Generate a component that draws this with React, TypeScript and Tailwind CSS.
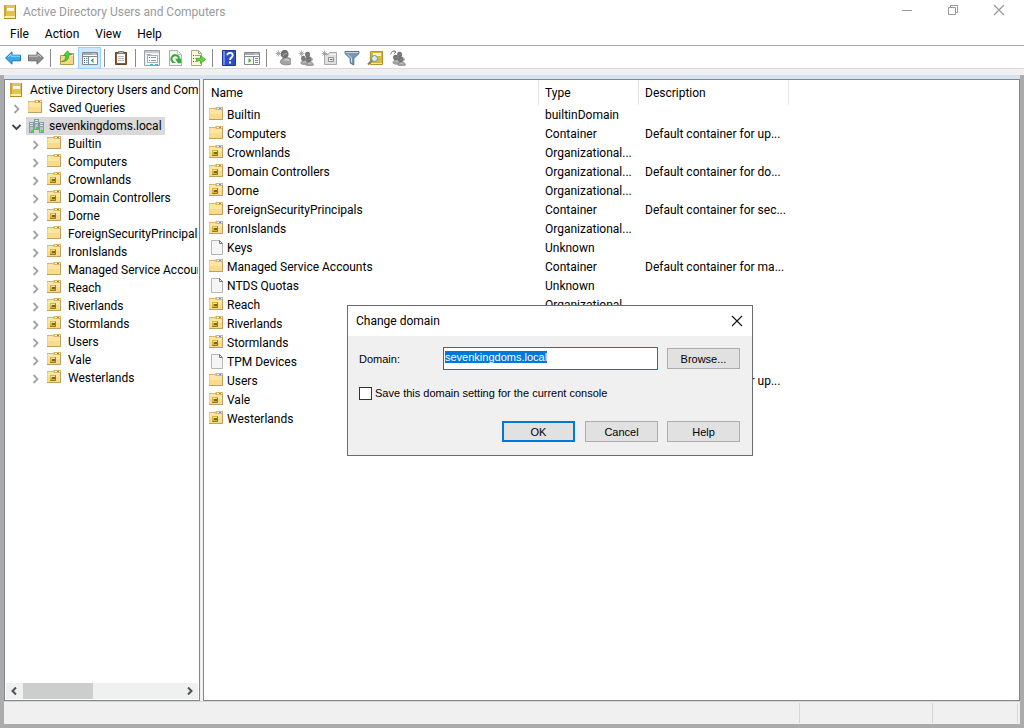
import { useEffect, useRef } from "react";
import type { ReactNode } from "react";

type Kind = "folder" | "ou" | "file";

type Entry = { name: string; kind: Kind; type: string; description?: string; inTree?: boolean };

const entries: Entry[] = [
  { name: "Builtin", kind: "folder", type: "builtinDomain", inTree: true },
  { name: "Computers", kind: "folder", type: "Container", description: "Default container for up...", inTree: true },
  { name: "Crownlands", kind: "ou", type: "Organizational...", inTree: true },
  { name: "Domain Controllers", kind: "ou", type: "Organizational...", description: "Default container for do...", inTree: true },
  { name: "Dorne", kind: "ou", type: "Organizational...", inTree: true },
  { name: "ForeignSecurityPrincipals", kind: "folder", type: "Container", description: "Default container for sec...", inTree: true },
  { name: "IronIslands", kind: "ou", type: "Organizational...", inTree: true },
  { name: "Keys", kind: "file", type: "Unknown" },
  { name: "Managed Service Accounts", kind: "folder", type: "Container", description: "Default container for ma...", inTree: true },
  { name: "NTDS Quotas", kind: "file", type: "Unknown" },
  { name: "Reach", kind: "ou", type: "Organizational...", inTree: true },
  { name: "Riverlands", kind: "ou", type: "Organizational...", inTree: true },
  { name: "Stormlands", kind: "ou", type: "Organizational...", inTree: true },
  { name: "TPM Devices", kind: "file", type: "Unknown" },
  { name: "Users", kind: "folder", type: "Container", description: "Default container for up...", inTree: true },
  { name: "Vale", kind: "ou", type: "Organizational...", inTree: true },
  { name: "Westerlands", kind: "ou", type: "Organizational...", inTree: true },
];

function Icon({ children, viewBox = "0 0 16 16" }: { children: ReactNode; viewBox?: string }) {
  return (
    <svg className="size-4 shrink-0" viewBox={viewBox} fill="none" aria-hidden="true">
      {children}
    </svg>
  );
}

function FolderIcon({ ou = false }: { ou?: boolean }) {
  return (
    <Icon viewBox="0 1 16 16">
      <path d="M1 2H7L8 1H15V14H1Z" fill="#d9b56a" />
      <path d="M9 2H14V3H9Z" fill="#fffaf0" />
      <path d="M11 2H13V3H11Z" fill="#3f93ea" />
      <path d="M2 3H7L8 4H14V13H2Z" fill="#fde6a4" />
      <path d="M2 8H14V13H2Z" fill="#fadb8c" />
      <path d="M1.500 3V13.500" stroke="#ecd08d" />
      <path d="M14.500 3V13.500H1" stroke="#c0a062" />
      {ou && (
        <>
          <path d="M4 6H10V12H4Z" fill="#d2b53c" />
          <path d="M5 7H9V8H5Z" fill="#f4e594" />
          <path d="M6 8H9V10H6Z" fill="#7d6516" />
          <path d="M9.500 6.500V11.500H4" stroke="#94781c" />
        </>
      )}
    </Icon>
  );
}

function FileIcon() {
  return (
    <Icon>
      <path d="M3.500 .5H11.500L14.500 3.500V14.500H3.500Z" fill="#f5f5f6" stroke="#b5b5b7" />
      <path d="M11.500 .5V3.500H14.500Z" fill="#fff" stroke="#77777a" />
    </Icon>
  );
}

function EntryIcon({ kind }: { kind: Kind }) {
  return kind === "file" ? <FileIcon /> : <FolderIcon ou={kind === "ou"} />;
}

function ConsoleIcon() {
  return (
    <Icon>
      <path d="M2 1H14V15H2Z" fill="#b08d2a" />
      <path d="M2 1H13V14H2Z" fill="#e3c250" />
      <path d="M2 1H4V12H2Z" fill="#c8a535" />
      <path d="M5 4H12V7H5Z" fill="#fffdf0" />
      <path d="M3 12H13V14H3Z" fill="#fff0b0" />
    </Icon>
  );
}

function DomainIcon() {
  return (
    <Icon>
      {[
        [0, 4],
        [10, 4],
        [5, 1],
      ].map(([x, y]) => (
        <g key={x}>
          <path d={`M${x} ${y}h5v11h-5z`} fill="#8599a5" />
          <path d={`M${x + 1} ${y + 1}h3v1h-3zM${x + 1} ${y + 3}h3v1h-3z`} fill="#e3edf1" />
          <path d={`M${x + 1} ${y + 5}h3v5h-3z`} fill="#b3c5cf" />
          <path d={`M${x + 2} ${y + 8}h2v2h-2z`} fill="#35e51c" />
        </g>
      ))}
    </Icon>
  );
}

function ArrowIcon({ forward = false }: { forward?: boolean }) {
  return (
    <Icon>
      {forward ? (
        <>
          <path d="M15.500 8L9 1.800V5.200H.5V10.800H9V14.200Z" fill="#8d8d8d" stroke="#6a6a6a" />
          <path d="M1.500 7V6.200H10V4.200L13 7" stroke="#c9c9c9" />
        </>
      ) : (
        <>
          <path d="M.5 8L7 1.800V5.200H15.500V10.800H7V14.200Z" fill="#36a9e8" stroke="#2376b5" />
          <path d="M3 7L6 4.200V6.200H14.500V7" stroke="#9be0fb" />
        </>
      )}
    </Icon>
  );
}

function UpFolderIcon() {
  return (
    <Icon>
      <path d="M1.500 5.500H6L7 3.500H14.500V14.500H1.500Z" fill="#f6d885" stroke="#b8954e" />
      <path d="M10 4H14V6H10Z" fill="#fff6d8" />
      <path d="M11.500 4.500H13.500" stroke="#4d9be6" />
      <path d="M2.500 11.500C5.500 11 7 9 6.800 5.500H4.500L8.500 .8L12 5H9.800C10 9 7.500 12 2.500 11.500Z" fill="#55cf35" stroke="#2d9a23" strokeWidth=".7" />
    </Icon>
  );
}

function WindowFrame({ children }: { children: ReactNode }) {
  return (
    <Icon>
      <path d="M.5 2.500H15.500V14.500H.5Z" fill="#fff" stroke="#85888d" />
      <path d="M1 3H15V5H1Z" fill="#a5a9b0" />
      <path d="M10.500 4H11.500M12.500 4H13.500" stroke="#fff" />
      <path d="M1 6.500H15" stroke="#85888d" />
      {children}
    </Icon>
  );
}

function TreePaneIcon() {
  return (
    <WindowFrame>
      <path d="M6.500 6V14" stroke="#85888d" />
      <path d="M2 8.500H3M2 10.500H3M2 12.500H3" stroke="#474b52" />
      <path d="M4 8.500H5.500M4 10.500H5.500M4 12.500H5.500" stroke="#5c9bd8" />
      <path d="M11.500 8V13L8.500 10.500Z" fill="#35b92c" />
    </WindowFrame>
  );
}

function ActionPaneIcon() {
  return (
    <WindowFrame>
      <path d="M9.500 6V14" stroke="#85888d" />
      <path d="M4.500 8V13L7.500 10.500Z" fill="#35b92c" />
      <path d="M11 8.500H14M11 10.500H14M11 12.500H14" stroke="#6f8aa5" />
    </WindowFrame>
  );
}

function ClipboardIcon() {
  return (
    <Icon>
      <path d="M2.500 2.500H13.500V14.500H2.500Z" fill="#8d5a2b" stroke="#6b4424" />
      <path d="M4 4H12V13H4Z" fill="#fff" />
      <path d="M5 6.500H11M5 8.500H11M5 10.500H11" stroke="#b3bac2" />
      <path d="M5.500 1.500H10.500V3.500H5.500Z" fill="#c8c8c8" stroke="#777" />
    </Icon>
  );
}

function PropertiesIcon() {
  return (
    <Icon>
      <path d="M.5 .5H15.500V15.500H.5Z" fill="#f1f4f7" stroke="#9a9ea3" />
      <path d="M1 1H15V3H1Z" fill="#c5cad0" />
      <path d="M3.500 5.500H13.500V12.500H3.500Z" fill="#fff" stroke="#a1adba" />
      <path d="M2.500 4.500H7" stroke="#a1adba" />
      <path d="M5 7.500H6M5 10.500H6" stroke="#1a9be0" />
      <path d="M7 7.500H12M7 10.500H12" stroke="#8d99a6" />
      <path d="M6 14.500H9M11 14.500H14" stroke="#34b7f0" />
    </Icon>
  );
}

function RefreshIcon() {
  return (
    <Icon>
      <path d="M2.500 .5H10.500L14.500 4.500V15.500H2.500Z" fill="#f8f8f8" stroke="#adadad" />
      <path d="M10.500 .5V4.500H14.500Z" fill="#fff" stroke="#c4c4c4" />
      <path d="M6.500 12.200A3.700 3.700 0 1 1 11.800 9.800" stroke="#37ac35" strokeWidth="2" />
      <path d="M8 8.800H14V13.200H11Z" fill="#37ac35" />
      <path d="M5 12.500H8.500" stroke="#37ac35" />
    </Icon>
  );
}

function ExportIcon() {
  return (
    <Icon>
      <path d="M1.500 .5H8.500L11.500 3.500V15.500H1.500Z" fill="#fff8d9" stroke="#aaa58e" />
      <path d="M8.500 .5V3.500H11.500Z" fill="#fff" stroke="#aaa58e" />
      <path d="M3 5.500H4M3 8.500H4M3 11.500H4" stroke="#4c4c4c" />
      <path d="M5 5.500H10M5 8.500H8M5 11.500H8" stroke="#a79ea1" />
      <path d="M6.500 8.300H10.500V5.500L15.500 9.500L10.500 13.500V10.800H6.500Z" fill="#66d23e" stroke="#36a326" strokeWidth=".8" />
    </Icon>
  );
}

function HelpIcon() {
  return (
    <Icon>
      <path d="M1.500 .5H14.500V15.500H1.500Z" fill="#2e50c4" stroke="#1c3394" />
      <path d="M2 1H4V15H2Z" fill="#6d8be4" />
      <path d="M6.300 5.200C6.300 2.200 11.700 2.200 11.700 5.300C11.700 7.500 9 7.500 9 10" stroke="#fff" strokeWidth="1.800" />
      <path d="M8 11.500H10V13.500H8Z" fill="#fff" />
    </Icon>
  );
}

function Spark() {
  return <path d="M3.500 .5V6.500M.5 3.500H6.500M1.500 1.500L5.500 5.500M5.500 1.500L1.500 5.500" stroke="#9c9c9c" strokeWidth=".8" />;
}

function Person({ x, y, s }: { x: number; y: number; s: number }) {
  return (
    <g transform={`translate(${x} ${y}) scale(${s})`}>
      <path d="M1 9.500C1 7 3 5.500 5.500 5.500S10 7 10 9.500C8 11.500 3 11.500 1 9.500Z" fill="#a3a3a3" stroke="#7b7b7b" strokeWidth=".6" />
      <ellipse cx="4.200" cy="3" rx="2.900" ry="3.200" fill="#707070" />
      <path d="M4 7.800C5 7 6.500 7 7.500 8" stroke="#d5d5d5" />
      <path d="M3.200 4.500C3.500 3 4.500 2.500 6 2.800" stroke="#999" />
    </g>
  );
}

function NewUserIcon() {
  return (
    <Icon>
      <Spark />
      <Person x={4} y={0} s={1.350} />
    </Icon>
  );
}

function NewGroupIcon() {
  return (
    <Icon>
      <Spark />
      <Person x={6} y={2} s={0.850} />
      <Person x={2} y={6} s={0.800} />
      <Person x={7} y={7} s={0.850} />
    </Icon>
  );
}

function NewOuIcon() {
  return (
    <Icon>
      <path d="M3.500 4.500H7L8.500 2.500H15.500V14.500H3.500Z" fill="#dfdfdf" stroke="#a9a9a9" />
      <path d="M9 4.500H15" stroke="#f8f8f8" />
      <path d="M7.500 7.500H12.500V11.500H7.500Z" fill="#eee" stroke="#909090" />
      <path d="M9 9.500H11.500" stroke="#666" />
      <Spark />
    </Icon>
  );
}

function FilterIcon() {
  return (
    <Icon>
      <path d="M1 1.500H15L15 3.500L9.800 8.500V15L6.200 13V8.500L1 3.500Z" fill="#7797b3" stroke="#4e6f8d" />
      <path d="M1.500 2.500H14.500" stroke="#c9dbe9" />
      <path d="M4 4.500L7.500 8V12.500" stroke="#d3e3ef" />
    </Icon>
  );
}

function FindIcon() {
  return (
    <Icon>
      <path d="M3.500 1.500H15.500V14.500H3.500Z" fill="#d9b93d" stroke="#b0932c" />
      <path d="M6 3H14V6H6Z" fill="#fff5c2" />
      <path d="M4 13.500H15" stroke="#f6e7a0" />
      <path d="M1 14.500L5 10.500" stroke="#8b7d6b" strokeWidth="2" />
      <circle cx="7.500" cy="8.500" r="3" fill="#d8ecf5" stroke="#708b9d" />
    </Icon>
  );
}

function AddToGroupIcon() {
  return (
    <Icon>
      <Person x={6} y={2} s={0.850} />
      <Person x={2} y={5} s={0.850} />
      <Person x={7} y={7} s={0.850} />
      <path d="M.8 4.500C1 1.500 3 .8 5.500 1.800M3.500 .3L6 2L3.800 3.800" stroke="#777" />
    </Icon>
  );
}

function Separator() {
  return <div className="mr-1 ml-[3px] h-[18px] w-px bg-[#8a8a8a]" />;
}

function Tool({ label, active = false, children }: { label: string; active?: boolean; children: ReactNode }) {
  return (
    <button
      type="button"
      aria-label={label}
      className={
        active
          ? "flex h-[22px] w-[23px] items-center justify-center border border-[#99d1ff] bg-[#cce8ff]"
          : "flex h-[22px] w-[23px] items-center justify-center"
      }
    >
      {children}
    </button>
  );
}

function Chevron({ open = false }: { open?: boolean }) {
  return (
    <svg className="mr-[5px] h-3 w-3 shrink-0" viewBox="0 0 12 12" fill="none" aria-hidden="true">
      {open ? (
        <path d="M2.500 5L6.500 9L10.500 5" stroke="#404040" strokeWidth="1.800" />
      ) : (
        <path d="M4.500 3L8.500 7L4.500 11" stroke="#a3a3a3" strokeWidth="1.800" />
      )}
    </svg>
  );
}

function TreePane() {
  return (
    <nav aria-label="Console tree" className="flex w-49 shrink-0 flex-col border border-[#828790] bg-white">
      <ul className="mr-px flex-1 overflow-hidden pt-px whitespace-nowrap">
        <li className="flex h-[18px] items-center gap-1.5 pl-[3px]">
          <ConsoleIcon />
          <span className="min-w-0 flex-1 overflow-hidden">Active Directory Users and Computers</span>
        </li>
        <li className="flex h-[18px] items-center pl-[5px]">
          <Chevron />
          <FolderIcon />
          <span className="pl-1.5">Saved Queries</span>
        </li>
        <li>
          <div className="flex h-[18px] items-center pl-[5px]">
            <Chevron open />
            <span className="-ml-px flex h-[18px] items-center gap-1 bg-[#d9d9d9] pr-[3px] pl-[3px]">
              <DomainIcon />
              sevenkingdoms.local
            </span>
          </div>
          <ul>
            {entries
              .filter((e) => e.inTree)
              .map((e) => (
                <li key={e.name} className="flex h-[18px] items-center pl-6">
                  <Chevron />
                  <EntryIcon kind={e.kind} />
                  <span className="min-w-0 flex-1 overflow-hidden pl-1.5">{e.name}</span>
                </li>
              ))}
          </ul>
        </li>
      </ul>
      <div className="m-px flex h-4 items-center bg-[#f0f0f0]">
        <button type="button" aria-label="Scroll left" className="flex h-4 w-4 items-center justify-center">
          <svg className="size-2" viewBox="0 0 8 8" fill="none">
            <path d="M6 .5L2.500 4L6 7.500" stroke="#505050" strokeWidth="2" />
          </svg>
        </button>
        <div className="ml-px h-4 w-[70px] bg-[#cdcdcd]" />
        <button type="button" aria-label="Scroll right" className="ml-auto flex h-4 w-4 items-center justify-center">
          <svg className="size-2" viewBox="0 0 8 8" fill="none">
            <path d="M2 .5L5.500 4L2 7.500" stroke="#505050" strokeWidth="2" />
          </svg>
        </button>
      </div>
    </nav>
  );
}

function ListPane() {
  return (
    <main className="min-w-0 flex-1 overflow-hidden border border-[#828790] bg-white">
      <table className="w-[585px] table-fixed border-separate border-spacing-0 text-left whitespace-nowrap">
        <colgroup>
          <col className="w-[335px]" />
          <col className="w-[100px]" />
          <col className="w-[150px]" />
        </colgroup>
        <thead>
          <tr className="h-[25px]">
            <th className="border-r border-[#e5e5e5] p-0 pl-[7px] font-normal">Name</th>
            <th className="border-r border-[#e5e5e5] p-0 pl-1.5 font-normal">Type</th>
            <th className="border-r border-[#e5e5e5] p-0 pl-1.5 font-normal">Description</th>
          </tr>
        </thead>
        <tbody>
          {entries.map((e) => (
            <tr key={e.name} className="h-[19px]">
              <td className="p-0 pl-1">
                <div className="flex h-[19px] items-center gap-[3px]">
                  <EntryIcon kind={e.kind} />
                  {e.name}
                </div>
              </td>
              <td className="p-0 pl-1.5">{e.type}</td>
              <td className="p-0 pl-1.5">{e.description}</td>
            </tr>
          ))}
        </tbody>
      </table>
    </main>
  );
}

const dialogButton = "h-[21px] w-[73px] border border-[#adadad] bg-[#e1e1e1]";

function ChangeDomainDialog() {
  const input = useRef<HTMLInputElement>(null);
  useEffect(() => {
    input.current?.focus();
    input.current?.select();
  }, []);

  return (
    <div
      role="dialog"
      aria-labelledby="dialog-title"
      className="absolute top-[305px] left-[347px] w-[406px] border border-[#6b6b6b] bg-[#f0f0f0]"
    >
      <div className="flex h-[30px] items-center justify-between bg-white pr-[9px] pl-2">
        <h2 id="dialog-title">Change domain</h2>
        <button type="button" aria-label="Close">
          <svg className="size-3" viewBox="0 0 12 12" fill="none">
            <path d="M1 1L11 11M11 1L1 11" stroke="#111" strokeWidth="1.100" />
          </svg>
        </button>
      </div>
      <form
        className="px-3 pt-[11px] pb-[13px] font-['Liberation_Sans',Arial,sans-serif] text-[11px] leading-[14px]"
        onSubmit={(e) => e.preventDefault()}
      >
        <div className="-ml-px flex items-center">
          <label htmlFor="domain" className="w-21">
            Domain:
          </label>
          <input
            ref={input}
            id="domain"
            defaultValue="sevenkingdoms.local"
            spellCheck={false}
            className="h-[23px] w-[215px] border border-[#0078d7] bg-white px-px pb-[3px] outline-none selection:bg-[#0078d7] selection:text-white"
          />
          <button type="button" className={`ml-[9px] ${dialogButton}`}>
            Browse...
          </button>
        </div>
        <label className="-ml-px mt-[15px] mb-px flex h-4 items-center gap-[3px]">
          <input type="checkbox" className="size-[13px] appearance-none border border-[#333] bg-white" />
          Save this domain setting for the current console
        </label>
        <div className="mt-5 flex justify-end">
          <button type="submit" className="mr-2.5 h-[21px] w-[73px] border-2 border-[#0078d7] bg-[#e1e1e1]">
            OK
          </button>
          <button type="button" className={`mr-[9px] ${dialogButton}`}>
            Cancel
          </button>
          <button type="button" className={dialogButton}>
            Help
          </button>
        </div>
      </form>
    </div>
  );
}

export default function App() {
  return (
    <div className="relative flex h-screen flex-col overflow-hidden bg-[#ababab] font-[Roboto,'Open_Sans',sans-serif] text-[12px] leading-4 text-black">
      <header className="bg-white">
        <div className="flex h-6 items-center pl-0.5 text-[#999]">
          <ConsoleIcon />
          <h1 className="pl-[5px]">Active Directory Users and Computers</h1>
          <div className="ml-auto flex h-6 items-center gap-[34px] pr-[19px] pb-1">
            <button type="button" aria-label="Minimize">
              <svg className="size-3" viewBox="0 0 12 12" fill="none">
                <path d="M1 6.500H11" stroke="#999" />
              </svg>
            </button>
            <button type="button" aria-label="Restore">
              <svg className="size-3" viewBox="0 0 12 12" fill="none">
                <path d="M1.500 3.500H8.500V10.500H1.500ZM3.500 3.500V1.500H10.500V8.500H8.500" stroke="#999" />
              </svg>
            </button>
            <button type="button" aria-label="Close window">
              <svg className="size-3" viewBox="0 0 12 12" fill="none">
                <path d="M1 1L11 11M11 1L1 11" stroke="#999" strokeWidth="1.200" />
              </svg>
            </button>
          </div>
        </div>
        <div role="menubar" className="flex h-[21px] items-center gap-4 pb-px pl-2.5">
          <button type="button" role="menuitem">File</button>
          <button type="button" role="menuitem">Action</button>
          <button type="button" role="menuitem">View</button>
          <button type="button" role="menuitem">Help</button>
        </div>
        <div role="toolbar" aria-label="Standard" className="flex h-6 items-center border-t border-b border-t-[#a9a9b2] border-b-[#d9d9d9] pt-px pl-px">
          <Tool label="Back"><ArrowIcon /></Tool>
          <Tool label="Forward"><ArrowIcon forward /></Tool>
          <Separator />
          <Tool label="Up one level"><UpFolderIcon /></Tool>
          <Tool label="Show console tree" active><TreePaneIcon /></Tool>
          <Separator />
          <Tool label="Paste"><ClipboardIcon /></Tool>
          <Separator />
          <Tool label="Properties"><PropertiesIcon /></Tool>
          <Tool label="Refresh"><RefreshIcon /></Tool>
          <Tool label="Export list"><ExportIcon /></Tool>
          <Separator />
          <Tool label="Help topics"><HelpIcon /></Tool>
          <Tool label="Show action pane"><ActionPaneIcon /></Tool>
          <Separator />
          <Tool label="New user"><NewUserIcon /></Tool>
          <Tool label="New group"><NewGroupIcon /></Tool>
          <Tool label="New organizational unit"><NewOuIcon /></Tool>
          <Tool label="Filter"><FilterIcon /></Tool>
          <Tool label="Find"><FindIcon /></Tool>
          <Tool label="Add to group"><AddToGroupIcon /></Tool>
        </div>
        <div className="h-1.5 bg-[#f0f0f0]" />
      </header>
      <div className="mx-1 mb-1 flex min-h-0 flex-1 flex-col bg-[#f0f0f0]">
        <div className="h-1 bg-[#d5e2f0]" />
        <div className="flex min-h-0 flex-1 gap-[3px]">
          <TreePane />
          <ListPane />
        </div>
        <footer className="flex h-[23px] justify-end border-t border-[#d7d7d7] py-px pr-0.5">
          <div className="w-[134px] border-x border-[#d7d7d7]" />
          <div className="w-[85px] border-r border-[#d7d7d7]" />
        </footer>
      </div>
      <ChangeDomainDialog />
    </div>
  );
}
